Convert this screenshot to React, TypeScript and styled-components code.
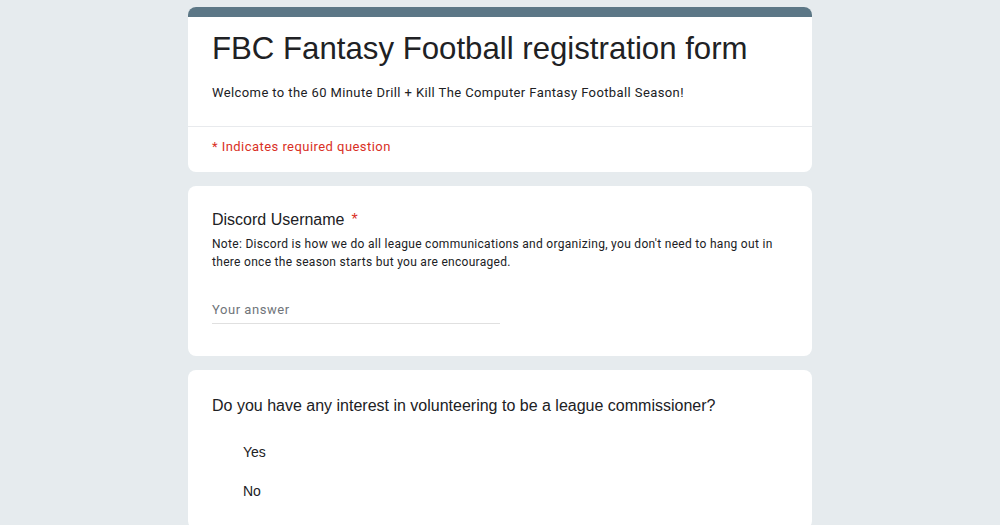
import styled, { createGlobalStyle } from 'styled-components';

const GlobalStyle = createGlobalStyle`
  html, body {
    margin: 0;
    padding: 0;
    background: #e6ebee;
  }
  body {
    font-family: Roboto, "Liberation Sans", Arial, sans-serif;
    color: #202124;
  }
`;

const Page = styled.div`
  width: 624px;
  margin: 0 auto;
  padding-top: 7px;
  display: flex;
  flex-direction: column;
  gap: 14px;
`;

const Card = styled.section`
  background: #ffffff;
  border-radius: 8px;
  overflow: hidden;
`;

const TopBar = styled.div`
  height: 10px;
  background: #5c7786;
`;

const HeaderBody = styled.div`
  padding: 12px 24px 23px;
`;

const Title = styled.h1`
  margin: 0;
  font-family: "Liberation Sans", Arial, sans-serif;
  font-weight: 400;
  font-size: 31.2px;
  line-height: 40px;
  color: #202124;
`;

const Description = styled.p`
  margin: 14px 0 0;
  font-size: 13px;
  line-height: 20px;
  letter-spacing: 0.4px;
  color: #202124;
`;

const Divider = styled.div`
  height: 1px;
  background: #e8eaed;
`;

const Required = styled.div`
  padding: 10px 24px 15px;
  font-size: 13px;
  line-height: 20px;
  letter-spacing: 0.45px;
  color: #d93025;
`;

const QuestionBody = styled.div<{ $top: number; $bottom: number }>`
  padding: ${(p) => p.$top}px 24px ${(p) => p.$bottom}px;
`;

const QuestionTitle = styled.div`
  font-family: "Liberation Sans", Arial, sans-serif;
  font-size: 16px;
  line-height: 24px;
  color: #202124;
`;

const Star = styled.span`
  color: #d93025;
  margin-left: 7px;
`;

const Note = styled.p`
  margin: 3px 0 0;
  width: 570px;
  font-size: 12px;
  line-height: 18px;
  letter-spacing: 0.3px;
  color: #202124;
`;

const AnswerField = styled.div`
  margin-top: 29px;
  width: 288px;
  padding-bottom: 3px;
  border-bottom: 1px solid #e0e0e0;
  font-size: 13px;
  line-height: 20px;
  letter-spacing: 0.55px;
  color: #70757a;
`;

const Options = styled.div`
  margin-top: 24px;
  padding-left: 31px;
  display: flex;
  flex-direction: column;
  gap: 19px;
`;

const Option = styled.div`
  font-family: "Liberation Sans", Arial, sans-serif;
  font-size: 14px;
  line-height: 20px;
  color: #202124;
`;

export default function App() {
  return (
    <>
      <GlobalStyle />
      <Page>
        <Card>
          <TopBar />
          <HeaderBody>
            <Title>FBC Fantasy Football registration form</Title>
            <Description>
              Welcome to the 60 Minute Drill + Kill The Computer Fantasy Football Season!
            </Description>
          </HeaderBody>
          <Divider />
          <Required>* Indicates required question</Required>
        </Card>

        <Card>
          <QuestionBody $top={22} $bottom={32}>
            <QuestionTitle>
              Discord Username<Star>*</Star>
            </QuestionTitle>
            <Note>
              Note: Discord is how we do all league communications and organizing, you don't need
              to hang out in there once the season starts but you are encouraged.
            </Note>
            <AnswerField>Your answer</AnswerField>
          </QuestionBody>
        </Card>

        <Card>
          <QuestionBody $top={24} $bottom={28}>
            <QuestionTitle>
              Do you have any interest in volunteering to be a league commissioner?
            </QuestionTitle>
            <Options>
              <Option>Yes</Option>
              <Option>No</Option>
            </Options>
          </QuestionBody>
        </Card>
      </Page>
    </>
  );
}
